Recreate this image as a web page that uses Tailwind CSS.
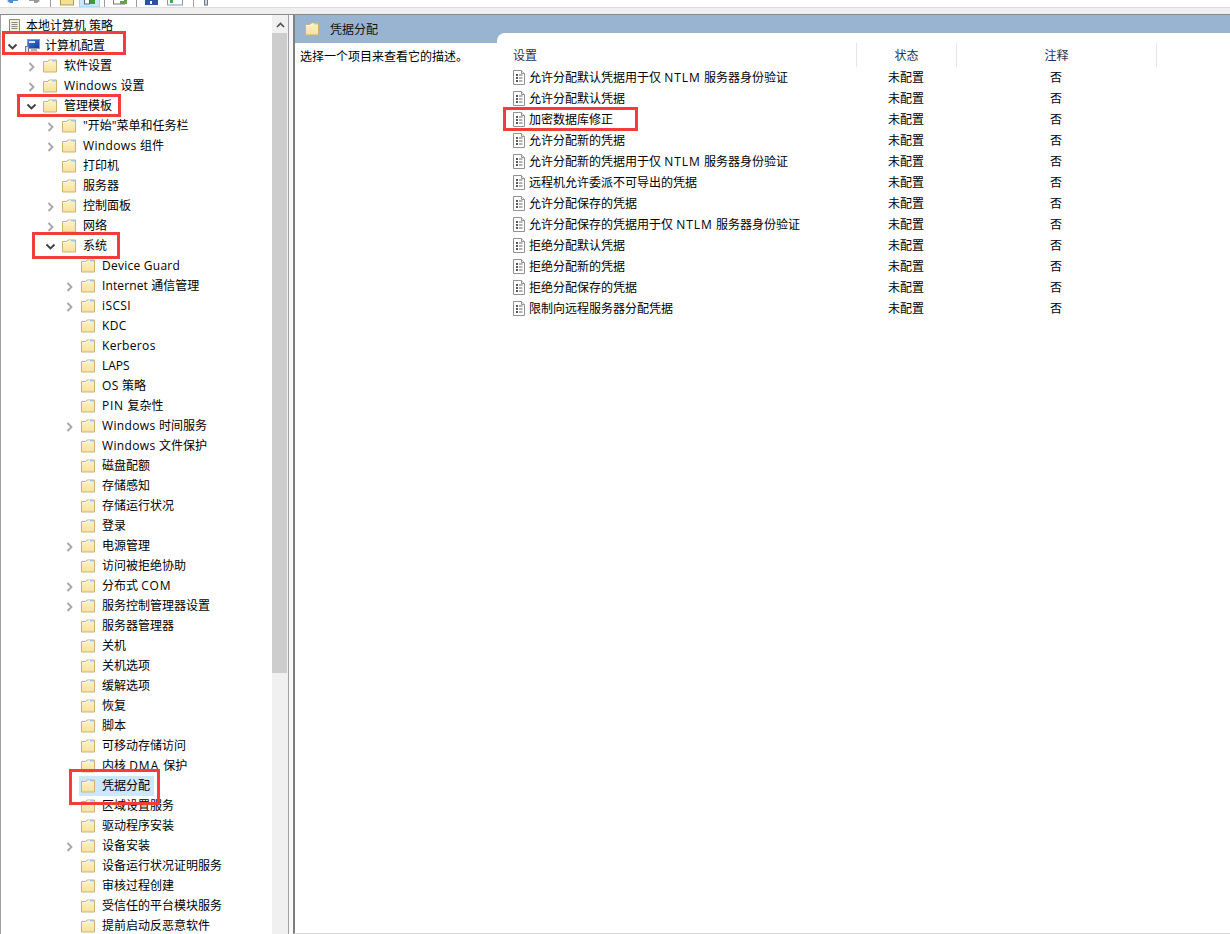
<!DOCTYPE html>
<html lang="zh-CN">
<head>
<meta charset="UTF-8">
<title>本地组策略编辑器</title>
<script src="https://cdn.jsdelivr.net/npm/@tailwindcss/browser@4"></script>
</head>
<body class="bg-white">
<!-- shared icons -->
<svg width="0" height="0" class="absolute">
  <defs>
    <linearGradient id="fold" x1="0" y1="0" x2="0" y2="1"><stop offset="0" stop-color="#fdf3c9"/><stop offset="1" stop-color="#f7e09a"/></linearGradient>
    <linearGradient id="screen" x1="0" y1="0" x2="1" y2="1"><stop offset="0" stop-color="#3f7fe0"/><stop offset="1" stop-color="#12389c"/></linearGradient>
    <symbol id="folder" viewBox="0 0 14 14">
      <path d="M.5 2.500h4.500l1-1.500h7.500v12H.5z" fill="url(#fold)" stroke="#cdb273"/>
      <path d="M1 3.500h5l1-1.500h6" fill="none" stroke="#fffbe6"/>
      <path d="M9 1h4v1.500H9z" fill="#9cc8ea"/>
    </symbol>
    <symbol id="open" viewBox="0 0 8 12"><path d="M2.500 3l4 4-4 4" fill="none" stroke="#a6a6a6" stroke-width="1.800"/></symbol>
    <symbol id="down" viewBox="0 0 12 8"><path d="M1.500 2.500l4 4 4-4" fill="none" stroke="#404040" stroke-width="1.900"/></symbol>
    <symbol id="policy" viewBox="0 0 12 15">
      <path d="M.5.500h8l3 3v11H.5z" fill="#fff" stroke="#929292"/>
      <path d="M8.500.5v3h3" fill="#e8e8e8" stroke="#929292"/>
      <path d="M3 5h2M3 8h2M3 11h2" stroke="#222" stroke-width="1.500"/>
      <path d="M6 5h3.500M6 8h3.500M6 11h3.500" stroke="#666"/>
    </symbol>
  </defs>
</svg>

<div class="relative w-[1230px] h-[934px] overflow-hidden flex flex-col bg-[#efefef] text-black text-[12px] leading-5 font-['Open_Sans','Noto_Sans_CJK_SC',sans-serif]">

  <!-- toolbar, cut off by the crop -->
  <div class="h-[7px] bg-white flex items-end overflow-hidden shrink-0">
    <svg width="230" height="7" viewBox="0 0 230 7">
      <path d="M7 1l4-3h7v3h-5v2h-3z" fill="#4d8fd6"/>
      <path d="M40 1l-4-3h-7v3h5v2h3z" fill="#9a9a9a"/>
      <path d="M50.500 0v7M104.500 0v7M136.500 0v7M193.500 0v7" stroke="#a0a0a0"/>
      <rect x="60.500" y="-1" width="13" height="6" fill="#f5de95" stroke="#b89b50"/>
      <rect x="79.500" y="-1" width="20" height="8" fill="#cce8ff" stroke="#99d1ff"/>
      <rect x="84.500" y="-1" width="5" height="5" fill="#fff" stroke="#4a6a90"/>
      <path d="M90 0h5v4h-5z" fill="#3a9a4a"/>
      <rect x="113.500" y="-1" width="11" height="5" fill="#fff" stroke="#777"/>
      <path d="M120 1h4v-2h3v5h-7z" fill="#5aa83e"/>
      <rect x="145" y="0" width="13" height="5" fill="#2f4f9f"/>
      <rect x="150" y="1" width="2" height="3" fill="#fff"/>
      <rect x="167.500" y="-1" width="15" height="6" fill="#fff" stroke="#7d9bbd"/>
      <path d="M170 0h3v3h-3z" fill="#4aa84a"/>
      <rect x="204.500" y="-1" width="3" height="6" fill="#c8d8ea" stroke="#777"/>
    </svg>
  </div>
  <div class="h-px bg-[#dcdcdc] shrink-0"></div>
  <div class="h-[6px] shrink-0"></div>
  <div class="h-px bg-[#8a8a8a] shrink-0"></div>

  <div class="flex flex-1 min-h-0">
    <!-- left: tree -->
    <div class="w-[289px] shrink-0 flex bg-white border-r border-[#a0a0a0] shadow-[inset_1px_0_0_#a0a0a0]">
      <div class="w-[272px] shrink-0 overflow-hidden pt-px">
        <div class="flex items-center h-5 pl-[7px] gap-[6px]"><svg width="13" height="15" viewBox="0 0 13 15"><path d="M2.500.5h10v11c0 1.500-1 3-2.500 3H1.500c-.8 0-1-1-1-2h2z" fill="#f6efd4" stroke="#8f8a78"/><path d="M4.500 3.500h6M4.500 5.500h6M4.500 7.500h6M4.500 9.500h6" stroke="#8a8a8a"/></svg><span>本地计算机 策略</span></div>
        <div class="flex items-center h-5 pl-[7px]">
          <span class="w-[17px]"><svg class="block" width="12" height="8"><use href="#down"/></svg></span>
          <svg class="mr-[5px]" width="16" height="17" viewBox="0 0 16 17"><rect x="3.500" y="1.500" width="12" height="9" fill="url(#screen)" stroke="#8f9aa8"/><path d="M5 3h6v2H5z" fill="#dce8fa"/><rect x="7" y="11" width="6" height="2" fill="#b5b5b5"/><rect x="5" y="13" width="10" height="1" fill="#d0d0d0"/><rect x="1.500" y="8.500" width="3" height="7" fill="#dbe3ec" stroke="#6e7f92"/></svg>
          <span>计算机配置</span>
        </div>
        <div class="flex items-center h-5 pl-[27px]"><span class="w-[16px]"><svg class="block" width="8" height="12"><use href="#open"/></svg></span><svg class="mr-[7px]" width="14" height="14"><use href="#folder"/></svg><span>软件设置</span></div>
        <div class="flex items-center h-5 pl-[27px]"><span class="w-[16px]"><svg class="block" width="8" height="12"><use href="#open"/></svg></span><svg class="mr-[7px]" width="14" height="14"><use href="#folder"/></svg><span><span class="tracking-[0.3px]">Windows </span>设置</span></div>
        <div class="flex items-center h-5 pl-[26px]"><span class="w-[17px]"><svg class="block" width="12" height="8"><use href="#down"/></svg></span><svg class="mr-[7px]" width="14" height="14"><use href="#folder"/></svg><span>管理模板</span></div>
        <div class="flex items-center h-5 pl-[46px]"><span class="w-[16px]"><svg class="block" width="8" height="12"><use href="#open"/></svg></span><svg class="mr-[7px]" width="14" height="14"><use href="#folder"/></svg><span>"开始"菜单和任务栏</span></div>
        <div class="flex items-center h-5 pl-[46px]"><span class="w-[16px]"><svg class="block" width="8" height="12"><use href="#open"/></svg></span><svg class="mr-[7px]" width="14" height="14"><use href="#folder"/></svg><span><span class="tracking-[0.35px]">Windows </span>组件</span></div>
        <div class="flex items-center h-5 pl-[46px]"><span class="w-[16px]"></span><svg class="mr-[7px]" width="14" height="14"><use href="#folder"/></svg><span>打印机</span></div>
        <div class="flex items-center h-5 pl-[46px]"><span class="w-[16px]"></span><svg class="mr-[7px]" width="14" height="14"><use href="#folder"/></svg><span>服务器</span></div>
        <div class="flex items-center h-5 pl-[46px]"><span class="w-[16px]"><svg class="block" width="8" height="12"><use href="#open"/></svg></span><svg class="mr-[7px]" width="14" height="14"><use href="#folder"/></svg><span>控制面板</span></div>
        <div class="flex items-center h-5 pl-[46px]"><span class="w-[16px]"><svg class="block" width="8" height="12"><use href="#open"/></svg></span><svg class="mr-[7px]" width="14" height="14"><use href="#folder"/></svg><span>网络</span></div>
        <div class="flex items-center h-5 pl-[45px]"><span class="w-[17px]"><svg class="block" width="12" height="8"><use href="#down"/></svg></span><svg class="mr-[7px]" width="14" height="14"><use href="#folder"/></svg><span>系统</span></div>
        <div class="flex items-center h-5 pl-[65px]"><span class="w-[16px]"></span><svg class="mr-[7px]" width="14" height="14"><use href="#folder"/></svg><span class="tracking-[0.25px]">Device Guard</span></div>
        <div class="flex items-center h-5 pl-[65px]"><span class="w-[16px]"><svg class="block" width="8" height="12"><use href="#open"/></svg></span><svg class="mr-[7px]" width="14" height="14"><use href="#folder"/></svg><span><span class="tracking-[0.12px]">Internet </span>通信管理</span></div>
        <div class="flex items-center h-5 pl-[65px]"><span class="w-[16px]"><svg class="block" width="8" height="12"><use href="#open"/></svg></span><svg class="mr-[7px]" width="14" height="14"><use href="#folder"/></svg><span class="tracking-[0.4px]">iSCSI</span></div>
        <div class="flex items-center h-5 pl-[65px]"><span class="w-[16px]"></span><svg class="mr-[7px]" width="14" height="14"><use href="#folder"/></svg><span class="tracking-[0.3px]">KDC</span></div>
        <div class="flex items-center h-5 pl-[65px]"><span class="w-[16px]"></span><svg class="mr-[7px]" width="14" height="14"><use href="#folder"/></svg><span class="tracking-[0.35px]">Kerberos</span></div>
        <div class="flex items-center h-5 pl-[65px]"><span class="w-[16px]"></span><svg class="mr-[7px]" width="14" height="14"><use href="#folder"/></svg><span>LAPS</span></div>
        <div class="flex items-center h-5 pl-[65px]"><span class="w-[16px]"></span><svg class="mr-[7px]" width="14" height="14"><use href="#folder"/></svg><span><span class="tracking-[0.3px]">OS </span>策略</span></div>
        <div class="flex items-center h-5 pl-[65px]"><span class="w-[16px]"></span><svg class="mr-[7px]" width="14" height="14"><use href="#folder"/></svg><span><span class="tracking-[0.7px]">PIN </span>复杂性</span></div>
        <div class="flex items-center h-5 pl-[65px]"><span class="w-[16px]"><svg class="block" width="8" height="12"><use href="#open"/></svg></span><svg class="mr-[7px]" width="14" height="14"><use href="#folder"/></svg><span><span class="tracking-[0.35px]">Windows </span>时间服务</span></div>
        <div class="flex items-center h-5 pl-[65px]"><span class="w-[16px]"></span><svg class="mr-[7px]" width="14" height="14"><use href="#folder"/></svg><span><span class="tracking-[0.35px]">Windows </span>文件保护</span></div>
        <div class="flex items-center h-5 pl-[65px]"><span class="w-[16px]"></span><svg class="mr-[7px]" width="14" height="14"><use href="#folder"/></svg><span>磁盘配额</span></div>
        <div class="flex items-center h-5 pl-[65px]"><span class="w-[16px]"></span><svg class="mr-[7px]" width="14" height="14"><use href="#folder"/></svg><span>存储感知</span></div>
        <div class="flex items-center h-5 pl-[65px]"><span class="w-[16px]"></span><svg class="mr-[7px]" width="14" height="14"><use href="#folder"/></svg><span>存储运行状况</span></div>
        <div class="flex items-center h-5 pl-[65px]"><span class="w-[16px]"></span><svg class="mr-[7px]" width="14" height="14"><use href="#folder"/></svg><span>登录</span></div>
        <div class="flex items-center h-5 pl-[65px]"><span class="w-[16px]"><svg class="block" width="8" height="12"><use href="#open"/></svg></span><svg class="mr-[7px]" width="14" height="14"><use href="#folder"/></svg><span>电源管理</span></div>
        <div class="flex items-center h-5 pl-[65px]"><span class="w-[16px]"></span><svg class="mr-[7px]" width="14" height="14"><use href="#folder"/></svg><span>访问被拒绝协助</span></div>
        <div class="flex items-center h-5 pl-[65px]"><span class="w-[16px]"><svg class="block" width="8" height="12"><use href="#open"/></svg></span><svg class="mr-[7px]" width="14" height="14"><use href="#folder"/></svg><span>分布式 <span class="tracking-[0.9px]">COM</span></span></div>
        <div class="flex items-center h-5 pl-[65px]"><span class="w-[16px]"><svg class="block" width="8" height="12"><use href="#open"/></svg></span><svg class="mr-[7px]" width="14" height="14"><use href="#folder"/></svg><span>服务控制管理器设置</span></div>
        <div class="flex items-center h-5 pl-[65px]"><span class="w-[16px]"></span><svg class="mr-[7px]" width="14" height="14"><use href="#folder"/></svg><span>服务器管理器</span></div>
        <div class="flex items-center h-5 pl-[65px]"><span class="w-[16px]"></span><svg class="mr-[7px]" width="14" height="14"><use href="#folder"/></svg><span>关机</span></div>
        <div class="flex items-center h-5 pl-[65px]"><span class="w-[16px]"></span><svg class="mr-[7px]" width="14" height="14"><use href="#folder"/></svg><span>关机选项</span></div>
        <div class="flex items-center h-5 pl-[65px]"><span class="w-[16px]"></span><svg class="mr-[7px]" width="14" height="14"><use href="#folder"/></svg><span>缓解选项</span></div>
        <div class="flex items-center h-5 pl-[65px]"><span class="w-[16px]"></span><svg class="mr-[7px]" width="14" height="14"><use href="#folder"/></svg><span>恢复</span></div>
        <div class="flex items-center h-5 pl-[65px]"><span class="w-[16px]"></span><svg class="mr-[7px]" width="14" height="14"><use href="#folder"/></svg><span>脚本</span></div>
        <div class="flex items-center h-5 pl-[65px]"><span class="w-[16px]"></span><svg class="mr-[7px]" width="14" height="14"><use href="#folder"/></svg><span>可移动存储访问</span></div>
        <div class="flex items-center h-5 pl-[65px]"><span class="w-[16px]"></span><svg class="mr-[7px]" width="14" height="14"><use href="#folder"/></svg><span>内核 <span class="tracking-[1px]">DMA </span>保护</span></div>
        <div class="flex items-center h-5 pl-[79px]"><span class="flex items-center h-5 bg-[#cce8ff] pl-[2px] pr-[4px]"><svg class="mr-[7px]" width="14" height="14"><use href="#folder"/></svg><span>凭据分配</span></span></div>
        <div class="flex items-center h-5 pl-[65px]"><span class="w-[16px]"></span><svg class="mr-[7px]" width="14" height="14"><use href="#folder"/></svg><span>区域设置服务</span></div>
        <div class="flex items-center h-5 pl-[65px]"><span class="w-[16px]"></span><svg class="mr-[7px]" width="14" height="14"><use href="#folder"/></svg><span>驱动程序安装</span></div>
        <div class="flex items-center h-5 pl-[65px]"><span class="w-[16px]"><svg class="block" width="8" height="12"><use href="#open"/></svg></span><svg class="mr-[7px]" width="14" height="14"><use href="#folder"/></svg><span>设备安装</span></div>
        <div class="flex items-center h-5 pl-[65px]"><span class="w-[16px]"></span><svg class="mr-[7px]" width="14" height="14"><use href="#folder"/></svg><span>设备运行状况证明服务</span></div>
        <div class="flex items-center h-5 pl-[65px]"><span class="w-[16px]"></span><svg class="mr-[7px]" width="14" height="14"><use href="#folder"/></svg><span>审核过程创建</span></div>
        <div class="flex items-center h-5 pl-[65px]"><span class="w-[16px]"></span><svg class="mr-[7px]" width="14" height="14"><use href="#folder"/></svg><span>受信任的平台模块服务</span></div>
        <div class="flex items-center h-5 pl-[65px]"><span class="w-[16px]"></span><svg class="mr-[7px]" width="14" height="14"><use href="#folder"/></svg><span>提前启动反恶意软件</span></div>
      </div>
      <!-- scrollbar -->
      <div class="w-[16px] shrink-0 bg-[#f0f0f0] flex flex-col">
        <div class="h-[18px] flex items-center justify-center pt-[2px]"><svg width="9" height="6" viewBox="0 0 9 6"><path d="M1 5l3.500-3.500L8 5" fill="none" stroke="#505050" stroke-width="1.600"/></svg></div>
        <div class="w-[15px] h-[640px] bg-[#cdcdcd]"></div>
      </div>
    </div>

    <!-- splitter -->
    <div class="w-[4px] shrink-0 bg-[#f8f8f8]"></div>

    <!-- right: details -->
    <div class="flex-1 min-w-0 flex flex-col border-l-2 border-[#7f7f7f] border-b border-b-[#d8d8d8] bg-white">
      <div class="h-[28px] shrink-0 bg-[#99b4d1] flex items-center pl-[10px] gap-[11px]">
        <svg width="14" height="14"><use href="#folder"/></svg>
        <span class="text-[#101010] pt-[2px]">凭据分配</span>
      </div>
      <div class="flex flex-1 min-h-0">
        <div class="w-[202px] shrink-0 pl-[5px] pt-[4px]">选择一个项目来查看它的描述。</div>
        <div class="flex-1 -mt-[10px] bg-white rounded-tl-[8px]">
          <div class="flex h-[24px] mt-[10px] text-[#1f3350]">
            <div class="w-[360px] pl-[16px] border-r border-[#e5e5e5] leading-[25px]">设置</div>
            <div class="w-[100px] text-center border-r border-[#e5e5e5] leading-[25px]">状态</div>
            <div class="w-[200px] text-center border-r border-[#e5e5e5] leading-[25px]">注释</div>
          </div>
          <div class="flex h-[21px] items-center"><div class="w-[359px] pl-[16px] flex items-center gap-[4px]"><svg width="12" height="15"><use href="#policy"/></svg><span>允许分配默认凭据用于仅 <span class="tracking-[1px]">NTLM</span> 服务器身份验证</span></div><div class="w-[100px] text-center">未配置</div><div class="w-[200px] text-center">否</div></div>
          <div class="flex h-[21px] items-center"><div class="w-[359px] pl-[16px] flex items-center gap-[4px]"><svg width="12" height="15"><use href="#policy"/></svg><span>允许分配默认凭据</span></div><div class="w-[100px] text-center">未配置</div><div class="w-[200px] text-center">否</div></div>
          <div class="flex h-[21px] items-center"><div class="w-[359px] pl-[16px] flex items-center gap-[4px]"><svg width="12" height="15"><use href="#policy"/></svg><span>加密数据库修正</span></div><div class="w-[100px] text-center">未配置</div><div class="w-[200px] text-center">否</div></div>
          <div class="flex h-[21px] items-center"><div class="w-[359px] pl-[16px] flex items-center gap-[4px]"><svg width="12" height="15"><use href="#policy"/></svg><span>允许分配新的凭据</span></div><div class="w-[100px] text-center">未配置</div><div class="w-[200px] text-center">否</div></div>
          <div class="flex h-[21px] items-center"><div class="w-[359px] pl-[16px] flex items-center gap-[4px]"><svg width="12" height="15"><use href="#policy"/></svg><span>允许分配新的凭据用于仅 <span class="tracking-[1px]">NTLM</span> 服务器身份验证</span></div><div class="w-[100px] text-center">未配置</div><div class="w-[200px] text-center">否</div></div>
          <div class="flex h-[21px] items-center"><div class="w-[359px] pl-[16px] flex items-center gap-[4px]"><svg width="12" height="15"><use href="#policy"/></svg><span>远程机允许委派不可导出的凭据</span></div><div class="w-[100px] text-center">未配置</div><div class="w-[200px] text-center">否</div></div>
          <div class="flex h-[21px] items-center"><div class="w-[359px] pl-[16px] flex items-center gap-[4px]"><svg width="12" height="15"><use href="#policy"/></svg><span>允许分配保存的凭据</span></div><div class="w-[100px] text-center">未配置</div><div class="w-[200px] text-center">否</div></div>
          <div class="flex h-[21px] items-center"><div class="w-[359px] pl-[16px] flex items-center gap-[4px]"><svg width="12" height="15"><use href="#policy"/></svg><span>允许分配保存的凭据用于仅 <span class="tracking-[1px]">NTLM</span> 服务器身份验证</span></div><div class="w-[100px] text-center">未配置</div><div class="w-[200px] text-center">否</div></div>
          <div class="flex h-[21px] items-center"><div class="w-[359px] pl-[16px] flex items-center gap-[4px]"><svg width="12" height="15"><use href="#policy"/></svg><span>拒绝分配默认凭据</span></div><div class="w-[100px] text-center">未配置</div><div class="w-[200px] text-center">否</div></div>
          <div class="flex h-[21px] items-center"><div class="w-[359px] pl-[16px] flex items-center gap-[4px]"><svg width="12" height="15"><use href="#policy"/></svg><span>拒绝分配新的凭据</span></div><div class="w-[100px] text-center">未配置</div><div class="w-[200px] text-center">否</div></div>
          <div class="flex h-[21px] items-center"><div class="w-[359px] pl-[16px] flex items-center gap-[4px]"><svg width="12" height="15"><use href="#policy"/></svg><span>拒绝分配保存的凭据</span></div><div class="w-[100px] text-center">未配置</div><div class="w-[200px] text-center">否</div></div>
          <div class="flex h-[21px] items-center"><div class="w-[359px] pl-[16px] flex items-center gap-[4px]"><svg width="12" height="15"><use href="#policy"/></svg><span>限制向远程服务器分配凭据</span></div><div class="w-[100px] text-center">未配置</div><div class="w-[200px] text-center">否</div></div>
        </div>
      </div>
    </div>
  </div>

  <!-- red annotation boxes drawn over the screenshot -->
  <div class="absolute left-[2px] top-[31px] w-[124px] h-[24px] border-[3px] border-[#f43c3c]"></div>
  <div class="absolute left-[17px] top-[94px] w-[104px] h-[23px] border-[3px] border-[#f43c3c]"></div>
  <div class="absolute left-[32px] top-[232px] w-[88px] h-[27px] border-[3px] border-[#f43c3c]"></div>
  <div class="absolute left-[69px] top-[769px] w-[91px] h-[36px] border-[3px] border-[#f43c3c]"></div>
  <div class="absolute left-[503px] top-[107px] w-[135px] h-[24px] border-[3px] border-[#f43c3c]"></div>
</div>
</body>
</html>
